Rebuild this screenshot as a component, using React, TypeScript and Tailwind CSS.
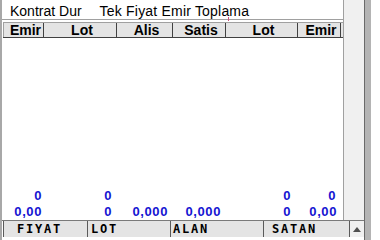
import React from "react";

const cols = "grid grid-cols-[41px_73px_56px_53px_72px_43px]";

export default function App() {
  const headers = ["Emir", "Lot", "Alis", "Satis", "Lot", "Emir"];
  const row1 = [
    { t: "0", pr: "pr-[2px]" },
    { t: "0", pr: "pr-[5px]" },
    { t: "", pr: "pr-[5px]" },
    { t: "", pr: "pr-[5px]" },
    { t: "0", pr: "pr-[7px]" },
    { t: "0", pr: "pr-[5px]" },
  ];
  const row2 = [
    { t: "0,00", pr: "pr-[2px]" },
    { t: "0", pr: "pr-[5px]" },
    { t: "0,000", pr: "pr-[5px]" },
    { t: "0,000", pr: "pr-[5px]" },
    { t: "0", pr: "pr-[7px]" },
    { t: "0,00", pr: "pr-[4px]" },
  ];
  return (
    <div className="relative flex w-[380px] h-[240px] overflow-hidden bg-white font-['Liberation_Sans',Arial,sans-serif]">
      <div className="w-[2px] bg-[#a8a8a8]" />
      <div className="flex flex-col w-[362px]">
        <div className="flex h-[220px]">
          <div className="flex flex-col w-[341px]">
            <div className="h-[20px] border-b border-[#a0a0a0] flex pt-[3px] text-[14px] leading-[16px] text-black whitespace-nowrap">
              <span className="ml-[8px]">Kontrat Dur</span>
              <span className="ml-[18px] tracking-[0.2px]">Tek Fiyat Emir Toplama</span>
            </div>
            <div className="h-[2px]" />
            <div className={`${cols} ml-[1px] h-[16px] border-t border-b border-t-[#a0a0a0] border-b-[#404040] bg-[#e4e4e4] text-[14px] leading-[14px] font-bold text-black`}>
              {headers.map((h, i) => (
                <div
                  key={i}
                  className={`border-r border-[#404040] text-center pl-[4px] whitespace-nowrap overflow-hidden ${i === 0 ? "border-l border-l-[#a0a0a0]" : ""}`}
                >
                  {h}
                </div>
              ))}
            </div>
            <div className="flex-1 flex flex-col justify-end text-[13px] tracking-[0.6px] font-bold text-[#1414d2]">
              <div className={`${cols} ml-[1px] h-[16px] leading-[14px]`}>
                {row1.map((c, i) => (
                  <div key={i} className={`text-right ${c.pr}`}>{c.t}</div>
                ))}
              </div>
              <div className={`${cols} ml-[1px] h-[15px] leading-[14px]`}>
                {row2.map((c, i) => (
                  <div key={i} className={`text-right ${c.pr}`}>{c.t}</div>
                ))}
              </div>
            </div>
          </div>
          <div className="w-px bg-[#a0a0a0]" />
          <div className="flex-1 bg-[#f0f0f0]" />
        </div>
        <div className="h-[20px] flex flex-col border-t border-[#7a7a7a]">
          <div className="flex h-[16px] ml-[1px] text-[12px] leading-[16px] font-bold tracking-[1.8px] text-black font-['DejaVu_Sans_Mono',monospace]">
            <div className="w-[85px] bg-[#e4e4e4] border-l border-r border-[#5a5a5a] pl-[13px]">FIYAT</div>
            <div className="w-[83px] bg-[#e4e4e4] border-r border-[#5a5a5a] pl-[3px]">LOT</div>
            <div className="w-[93px] bg-[#e4e4e4] border-r border-[#5a5a5a] pl-[2px]">ALAN</div>
            <div className="w-[86px] bg-[#e4e4e4] border-r border-[#5a5a5a] pl-[8px]">SATAN</div>
            <div className="flex-1 bg-[#f0f0f0] flex items-center justify-center">
              <svg width="8" height="5" viewBox="0 0 8 5">
                <polygon points="4,0 8,5 0,5" fill="#505050" />
              </svg>
            </div>
          </div>
          <div className="flex-1 bg-white" />
        </div>
      </div>
      <div className="w-px bg-[#6a6a6a]" />
      <div className="w-[6px] bg-[#b4b4b4]" />
      <div className="flex-1 bg-white" />
      <div className="absolute left-[228px] top-[17px] w-px h-[4px] bg-[#d0507a]" />
    </div>
  );
}
